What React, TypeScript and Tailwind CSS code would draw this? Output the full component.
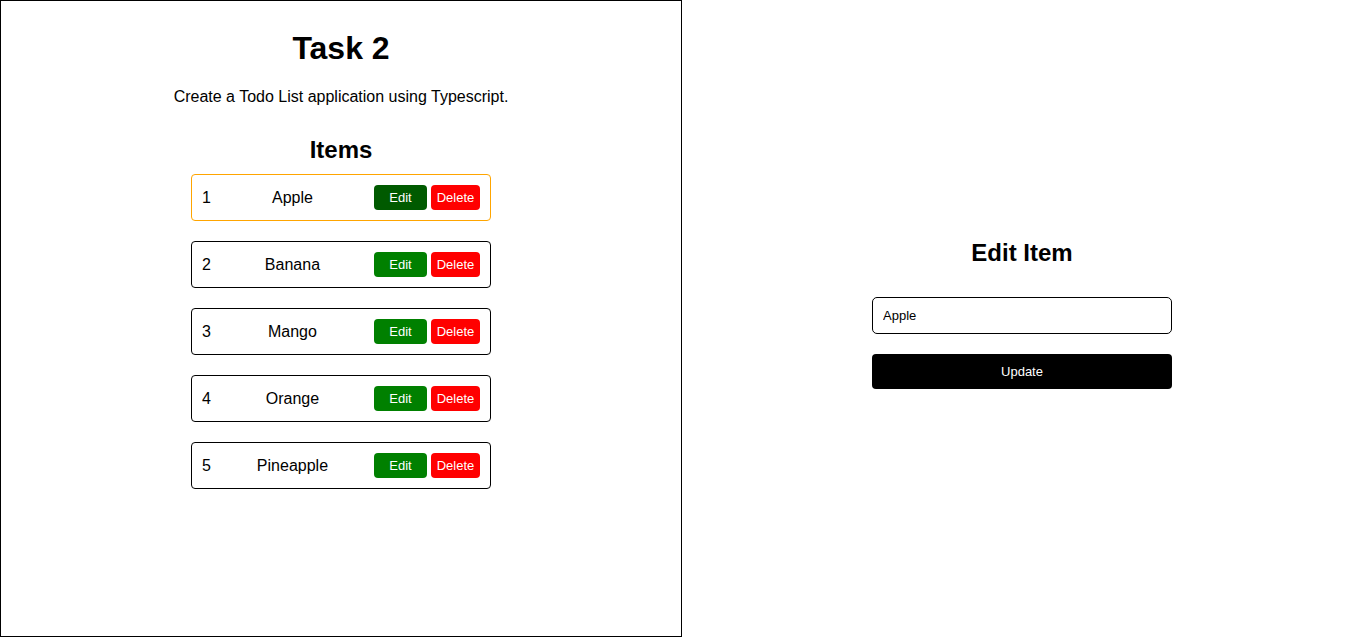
const items = ["Apple", "Banana", "Mango", "Orange", "Pineapple"];

const ItemRow = ({ index, name, active }: { index: number; name: string; active: boolean }) => {
  return (
    <div
      className={
        active
          ? "flex w-[300px] items-center justify-between rounded-[4px] border border-[#ffa500] py-[10px] pl-[10px] pr-[10px]"
          : "flex w-[300px] items-center justify-between rounded-[4px] border border-black py-[10px] pl-[10px] pr-[10px]"
      }
    >
      <span className="text-[16px]">{index}</span>
      <span className="text-[16px]">{name}</span>
      <div className="flex gap-[4px]">
        <button
          className={
            active
              ? "h-[25px] w-[53px] rounded-[4px] bg-[#005a00] text-[13px] text-white"
              : "h-[25px] w-[53px] rounded-[4px] bg-[#008000] text-[13px] text-white"
          }
        >
          Edit
        </button>
        <button className="h-[25px] w-[49px] rounded-[4px] bg-[#ff0000] text-[13px] text-white">
          Delete
        </button>
      </div>
    </div>
  );
};

export default function App() {
  return (
    <div className="flex h-[637px] w-[1362px] bg-white font-['Liberation_Sans',Arial,sans-serif] text-black">
      {/* list side */}
      <div className="flex h-[637px] w-[682px] flex-col items-center border border-black pt-[29px]">
        <h1 className="text-[32px] font-bold leading-[37px]">Task 2</h1>
        <p className="mt-[21px] text-[16px] leading-[18px]">
          Create a Todo List application using Typescript.
        </p>
        <h2 className="mt-[30px] text-[24px] font-bold leading-[28px]">Items</h2>
        <div className="mt-[10px] flex flex-col gap-[20px]">
          {items.map((name, i) => (
            <ItemRow key={name} index={i + 1} name={name} active={i === 0} />
          ))}
        </div>
      </div>

      {/* edit side */}
      <div className="flex flex-1 flex-col items-center justify-center pb-[9px]">
        <h2 className="text-[24px] font-bold leading-[28px]">Edit Item</h2>
        <input
          className="mt-[30px] h-[37px] w-[300px] rounded-[5px] border border-black px-[10px] text-[13px] outline-none"
          defaultValue="Apple"
        />
        <button className="mt-[20px] h-[35px] w-[300px] rounded-[4px] bg-black pt-[1px] text-[13px] text-white">
          Update
        </button>
      </div>
    </div>
  );
}
